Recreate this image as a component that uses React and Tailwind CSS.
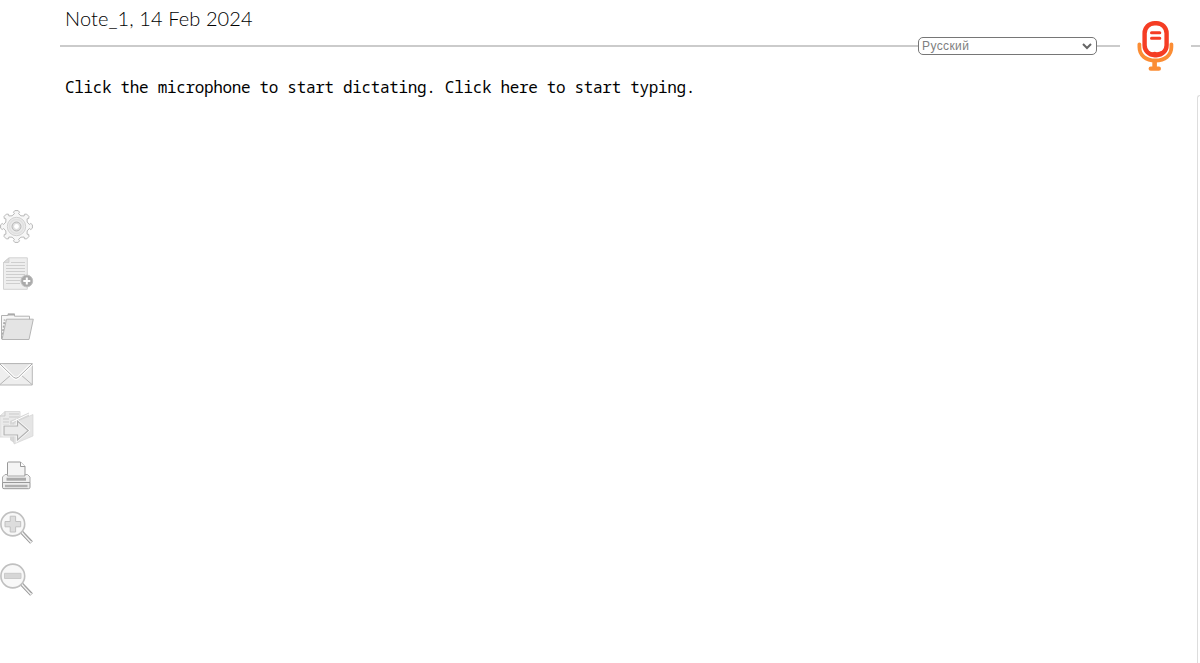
import { useState } from 'react'

// Eight teeth with flared tops and rounded valleys between them
const gearPoint = (r, deg) => {
  const a = (deg * Math.PI) / 180
  return `${(16.5 + r * Math.cos(a)).toFixed(2)} ${(16.5 + r * Math.sin(a)).toFixed(2)}`
}

const gearPath =
  [0, 45, 90, 135, 180, 225, 270, 315]
    .map((t, i) => {
      const start = `${i === 0 ? 'M' : 'L'}${gearPoint(13, t - 9)}`
      return `${start} L${gearPoint(14.6, t - 12)} L${gearPoint(16, t - 6)} L${gearPoint(16, t + 6)} L${gearPoint(14.6, t + 12)} L${gearPoint(13, t + 9)} Q${gearPoint(10.5, t + 22.5)} ${gearPoint(13, t + 36)}`
    })
    .join(' ') + ' Z'

function GearIcon() {
  return (
    <svg width="33" height="33" viewBox="0 0 33 33" fill="none">
      <path d={gearPath} fill="#f7f7f7" stroke="#b9b9b9" />
      <circle cx="16.5" cy="16.5" r="9.2" fill="#ececec" stroke="#d0d0d0" />
      <circle cx="16.5" cy="16.5" r="7" stroke="#e0e0e0" strokeWidth="1.5" />
      <circle cx="16.5" cy="16.5" r="4.5" fill="#dedede" stroke="#b8b8b8" />
      <circle cx="16.5" cy="16.5" r="2.4" fill="#fff" />
    </svg>
  )
}

function NewNoteIcon() {
  return (
    <svg width="34" height="34" viewBox="0 0 34 34" fill="none">
      <path d="M9 .8H27.3V32.3H3.5V5.5Z" fill="#eee" stroke="#d3d3d3" />
      <path d="M9 1V5.5H3.5Z" fill="#ddd" stroke="#c8c8c8" strokeWidth="0.7" />
      <path d="M11 5.5H25M6 8.5H25M6 11.5H25M6 14.5H25M6 17.5H25M6 20.5H22M6 23.5H20M6 26.5H20" stroke="#cecece" />
      <circle cx="26.8" cy="24" r="5.9" fill="#aaa" stroke="#c2c2c2" />
      <path d="M26.8 20.5V27.5M23.3 24H30.3" stroke="#fff" strokeWidth="2" />
    </svg>
  )
}

function FolderIcon() {
  return (
    <svg width="34" height="29" viewBox="0 0 34 29" fill="none">
      <path d="M1.5 27V3.5H8V1.8H14.5V4.2H29.5V8" fill="#f7f7f7" stroke="#b2b2b2" />
      <path d="M8 2H14.5V3.5H8Z" fill="#aaa" />
      <path d="M2 26L4.7 7.5" stroke="#aaa" strokeWidth="1.8" strokeDasharray="2 1.5" />
      <path d="M6.5 7.2H33.3L29 27.5H2Z" fill="#e4e4e4" stroke="#b5b5b5" />
    </svg>
  )
}

function MailIcon() {
  return (
    <svg width="33" height="23" viewBox="0 0 33 23" fill="none">
      <path d="M-.5 .6H32.3V22H-.5Z" fill="#eee" stroke="#b8b8b8" />
      <path d="M0 21.5L11.5 11.5M32 21.5L20.5 11.5" stroke="#b5b5b5" />
      <path d="M0 1L13.5 14.2Q16 16.5 18.5 14.2L32 1" fill="#e8e8e8" stroke="#fff" strokeWidth="3" />
      <path d="M0 1L13.5 14.2Q16 16.5 18.5 14.2L32 1" stroke="#a9a9a9" />
      <path d="M0 .6H32.3" stroke="#b8b8b8" />
    </svg>
  )
}

function ExportIcon() {
  return (
    <svg width="34" height="34" viewBox="0 0 34 34" fill="none">
      <path d="M5 .5H20V26H0V5Z" fill="#eaeaea" stroke="#dcdcdc" />
      <path d="M5 .5V5H0M3 8H9M3 11H9M3 14H9M9 3H19M9 6H19" stroke="#cbcbcb" />
      <path d="M10 10L29 1.5V22L14 32L10 29Z" fill="#d7d7d7" />
      <path d="M14 11.5L33 3.5V25L14 33Z" fill="#e5e5e5" stroke="#d0d0d0" strokeWidth="0.6" />
      <path d="M12 11L29 3" stroke="#fff" />
      <path d="M4 15H17.5V10L28.3 19.5L17.5 29V24H4Z" fill="#ebebeb" stroke="#fff" strokeWidth="2.6" />
      <path d="M4 15H17.5V10L28.3 19.5L17.5 29V24H4Z" fill="#ebebeb" stroke="#b2b2b2" strokeWidth="1.2" />
    </svg>
  )
}

function PrintIcon() {
  return (
    <svg width="32" height="29" viewBox="0 0 32 29" fill="none">
      <path d="M7.5 16V2Q7.5 1 8.5 1H20.5L25 5.5V16" fill="#f4f4f4" stroke="#999" />
      <path d="M20.5 1V5.5H25" fill="#fff" stroke="#999" />
      <path d="M7.5 13.5H5L2.5 16V21.5H30V16L27.5 13.5H25V15H7.5Z" fill="#f0f0f0" stroke="#aaa" />
      <path d="M6.5 18.2H26" stroke="#aaa" strokeWidth="3" />
      <path d="M2.5 21.5H30V26.3Q30 27.7 28.5 27.7H4Q2.5 27.7 2.5 26.3Z" fill="#ececec" stroke="#999" />
      <path d="M5 25H27.5" stroke="#b0b0b0" strokeWidth="2.4" />
    </svg>
  )
}

function ZoomIcon({ plus }) {
  return (
    <svg width="34" height="34" viewBox="0 0 34 34" fill="none">
      <path d="M21.5 21L31.5 31.5" stroke="#999" strokeWidth="3.8" />
      <path d="M21.5 21L31.3 31.3" stroke="#f5f5f5" strokeWidth="1.8" />
      <path d="M24 22.5L31 30" stroke="#aaa" strokeWidth="0.7" />
      <circle cx="12.8" cy="13" r="11.9" fill="#f8f8f8" stroke="#c0c0c0" strokeWidth="1.6" />
      {plus ? (
        <path d="M10.2 5.2H15.6V10.5H20.7V15.8H15.6V21H10.2V15.8H5V10.5H10.2Z" fill="#ddd" stroke="#c0c0c0" />
      ) : (
        <path d="M4.5 10.3H21V15.5H4.5Z" fill="#d6d6d6" stroke="#cacaca" />
      )}
    </svg>
  )
}

function MicIcon() {
  return (
    <svg width="38" height="51" viewBox="0 0 38 51" fill="none">
      <path d="M2.4 23.3V26C2.4 34.5 9 39.5 18.4 39.5S34.4 34.5 34.4 26V23.3" stroke="#fb8d34" strokeWidth="3.8" strokeLinecap="round" />
      <path d="M17.6 39V47.5" stroke="#fb8d34" strokeWidth="4.6" />
      <path d="M13.7 47.7H21.9" stroke="#fb8d34" strokeWidth="4.2" strokeLinecap="round" />
      <rect x="7.6" y="2.2" width="22" height="32" rx="10" fill="#fff" stroke="#f53d24" strokeWidth="4.4" />
      <path d="M10 30Q14.5 31.8 17.8 30.8Q21 31.8 24.8 29.8L26.6 29V31L23 33.5H14Z" fill="#f53d24" />
      <path d="M14.5 11.8H22.8M14.5 17.2H22.8" stroke="#f53d24" strokeWidth="3" strokeLinecap="round" />
    </svg>
  )
}

export default function App() {
  const [language, setLanguage] = useState('ru')
  const [title, setTitle] = useState('Note_1, 14 Feb 2024')

  return (
    <div className="flex h-[663px] w-full overflow-hidden bg-white">
      {/* Toolbar */}
      <nav className="flex w-[60px] shrink-0 flex-col items-start pt-[210px]">
        <button title="Settings"><GearIcon /></button>
        <button title="New note" className="mt-3.5"><NewNoteIcon /></button>
        <button title="Open" className="mt-[21px]"><FolderIcon /></button>
        <button title="Email" className="mt-[22px]"><MailIcon /></button>
        <button title="Export" className="mt-[25px]"><ExportIcon /></button>
        <button title="Print" className="mt-4"><PrintIcon /></button>
        <button title="Zoom in" className="mt-[21px]"><ZoomIcon plus /></button>
        <button title="Zoom out" className="mt-[18px]"><ZoomIcon /></button>
      </nav>

      {/* Note */}
      <main className="flex w-[1060px] shrink-0 flex-col">
        <input
          value={title}
          onChange={(e) => setTitle(e.target.value)}
          className="ml-[5px] h-[37px] w-[500px] pb-px font-['Lato',sans-serif] text-[20px] font-light tracking-[0.1px] text-black outline-none"
        />
        <div className="flex h-[18px] items-center">
          <div className="h-0.5 grow bg-[#cbcbcb]" />
          <div className="relative h-[18px] w-[179px] shrink-0">
            <select
              value={language}
              onChange={(e) => setLanguage(e.target.value)}
              className="block h-[18px] w-full appearance-none rounded-[5px] border border-[#767676] bg-white pl-[3px] font-['Liberation_Sans',sans-serif] text-[12px] leading-4 tracking-[0.4px] text-[#808080] outline-none"
            >
              <option value="ru">Русский</option>
              <option value="en">English</option>
            </select>
            <svg className="pointer-events-none absolute top-[6px] right-[5px]" width="10" height="7" viewBox="0 0 10 7" fill="none">
              <path d="M1 1L5 5L9 1" stroke="#666" strokeWidth="2" />
            </svg>
          </div>
          <div className="h-0.5 w-[23px] shrink-0 bg-[#cbcbcb]" />
        </div>
        <div
          contentEditable
          suppressContentEditableWarning
          className="mt-[22px] ml-[5px] grow font-['Noto_Sans_Mono','DejaVu_Sans_Mono',monospace] text-[16px] leading-[21px] tracking-[-0.335px] text-black outline-none"
        >
          Click the microphone to start dictating. Click here to start typing.
        </div>
      </main>

      {/* Microphone */}
      <aside className="w-[71px] shrink-0 pt-[21px] pl-[17px]">
        <button title="Dictate"><MicIcon /></button>
      </aside>

      {/* Edge of the side panel */}
      <div className="flex w-[9px] shrink-0 flex-col items-end pt-[45px]">
        <div className="h-0.5 w-full bg-[#cbcbcb]" />
        <div className="mt-12 w-[3px] grow rounded-tl-[4px] border-t border-l border-[#ddd]" />
      </div>
    </div>
  )
}
